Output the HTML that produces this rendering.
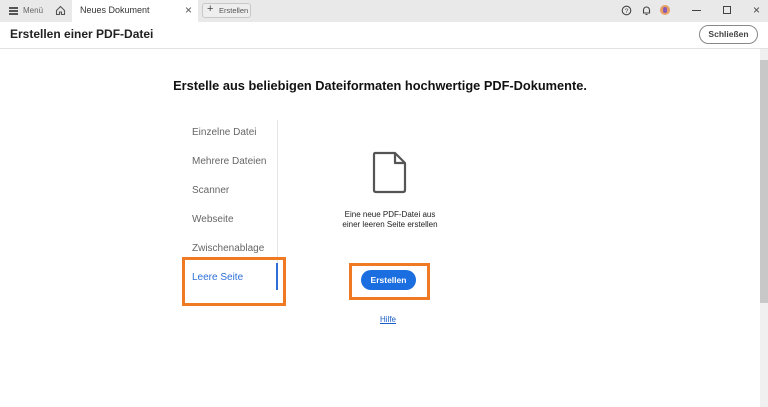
<!DOCTYPE html>
<html><head><meta charset="utf-8"><style>
*{margin:0;padding:0;box-sizing:border-box}
body{width:768px;height:407px;overflow:hidden;background:#fff;font-family:"Liberation Sans",sans-serif;position:relative}
.abs{position:absolute}
</style></head><body>
<div class="abs" style="left:0;top:0;width:768px;height:22px;background:#e9e9e9"></div>
<div class="abs" style="left:9px;top:7px;width:9px;height:1.5px;background:#555;box-shadow:0 3px 0 #555,0 6px 0 #555"></div>
<div class="abs" style="left:23px;top:6px;font-size:8px;color:#666">Menü</div>
<svg class="abs" style="left:55px;top:5px" width="11" height="11" viewBox="0 0 11 11"><path d="M1.5 5.5L5.5 1.5L9.5 5.5V9.5H6.5V7H4.5V9.5H1.5Z" fill="none" stroke="#555" stroke-width="1.1"/></svg>
<div class="abs" style="left:72px;top:0;width:126px;height:22px;background:#fff"></div>
<div class="abs" style="left:80px;top:5px;font-size:9px;color:#333">Neues Dokument</div>
<div class="abs" style="left:185px;top:3px;font-size:12px;color:#555">×</div>
<div class="abs" style="left:202px;top:3px;width:49px;height:15px;border:1px solid #c8c8c8;border-radius:3px;background:#eee"></div>
<div class="abs" style="left:207px;top:3px;font-size:11px;color:#444">+</div>
<div class="abs" style="left:219px;top:6px;font-size:7.5px;color:#555">Erstellen</div>
<svg class="abs" style="left:621px;top:5px" width="11" height="11"><circle cx="5.5" cy="5.5" r="4.3" fill="none" stroke="#444" stroke-width="1.1"/><text x="5.5" y="8" font-size="6.5" text-anchor="middle" fill="#444" font-family="Liberation Sans">?</text></svg>
<svg class="abs" style="left:641px;top:5px" width="11" height="11"><path d="M2.5 8V5A3 3 0 0 1 8.5 5V8H2.5ZM4.5 9.5H6.5" fill="none" stroke="#444" stroke-width="1.1"/></svg>
<div class="abs" style="left:660px;top:5px;width:10px;height:10px;border-radius:50%;background:#e8a060"></div>
<div class="abs" style="left:663px;top:7px;width:4px;height:6px;border-radius:2px;background:#8a5ab8"></div>
<div class="abs" style="left:692px;top:10px;width:9px;height:1px;background:#444"></div>
<div class="abs" style="left:723px;top:6px;width:8px;height:8px;border:1px solid #444"></div>
<div class="abs" style="left:753px;top:3px;font-size:12px;color:#444">×</div>
<div class="abs" style="left:10px;top:27px;font-size:12px;font-weight:bold;color:#222">Erstellen einer PDF-Datei</div>
<div class="abs" style="left:699px;top:25px;width:59px;height:19px;border:1px solid #888;border-radius:10px;font-size:8.5px;font-weight:bold;color:#444;text-align:center;line-height:17px">Schließen</div>
<div class="abs" style="left:0;top:48px;width:768px;height:1px;background:#e2e2e2"></div>
<div class="abs" style="left:760px;top:49px;width:8px;height:358px;background:#f0f0f0"></div>
<div class="abs" style="left:760px;top:60px;width:8px;height:243px;background:#c8c8c8"></div>
<div class="abs" style="left:0;top:78px;width:760px;text-align:center;font-size:12.8px;font-weight:bold;color:#111">Erstelle aus beliebigen Dateiformaten hochwertige PDF-Dokumente.</div>
<div class="abs" style="left:192px;top:118px;font-size:10px;color:#666;line-height:29px">Einzelne Datei<br>Mehrere Dateien<br>Scanner<br>Webseite<br>Zwischenablage<br><span style="color:#2d6fd6">Leere Seite</span></div>
<div class="abs" style="left:277px;top:120px;width:1px;height:145px;background:#e5e5e5"></div>
<div class="abs" style="left:276px;top:263px;width:2px;height:27px;background:#2d6fd6"></div>
<div class="abs" style="left:182px;top:257px;width:104px;height:49px;border:3px solid #f07a23"></div>
<svg class="abs" style="left:371px;top:150px" width="37" height="45" viewBox="0 0 37 45"><path d="M4 3H24L34 13V40Q34 42 32 42H5Q3 42 3 40V5Q3 3 4 3ZM24 3V13H34" fill="none" stroke="#555" stroke-width="2.2" stroke-linejoin="round"/></svg>
<div class="abs" style="left:320px;top:210px;width:140px;text-align:center;font-size:8px;color:#222;line-height:10px">Eine neue PDF-Datei aus<br>einer leeren Seite erstellen</div>
<div class="abs" style="left:349px;top:263px;width:81px;height:37px;border:3px solid #f07a23"></div>
<div class="abs" style="left:361px;top:270px;width:55px;height:20px;border-radius:10px;background:#1a6ee0;color:#fff;font-size:8.5px;font-weight:bold;text-align:center;line-height:20px">Erstellen</div>
<div class="abs" style="left:380px;top:315px;font-size:8px;color:#1a5fc8;text-decoration:underline">Hilfe</div>
</body></html>
